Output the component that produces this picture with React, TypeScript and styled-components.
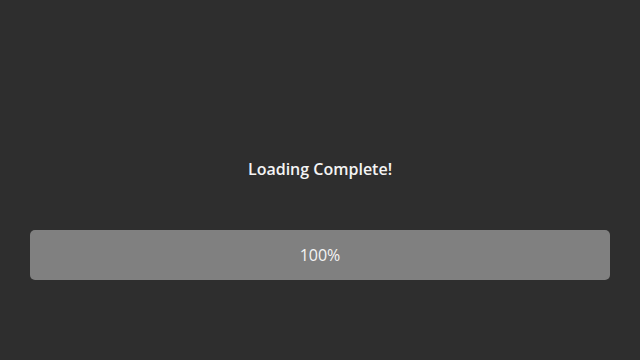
import styled, { createGlobalStyle } from "styled-components";

const GlobalStyle = createGlobalStyle`
  html, body {
    margin: 0;
    padding: 0;
    background: #2e2e2e;
  }
  body {
    font-family: "Open Sans", "Noto Sans", sans-serif;
  }
`;

const Screen = styled.div`
  width: 640px;
  height: 360px;
  box-sizing: border-box;
  padding: 158px 30px 0;
  display: flex;
  flex-direction: column;
  align-items: center;
  background: #2e2e2e;
`;

const Status = styled.div`
  color: #f4f4f4;
  font-size: 16px;
  font-weight: 600;
  line-height: 22px;
  height: 22px;
`;

const Bar = styled.div`
  margin-top: 50px;
  width: 100%;
  height: 50px;
  border-radius: 5px;
  background: #808080;
  display: flex;
  align-items: center;
  justify-content: center;
`;

const Percent = styled.span`
  color: #f4f4f4;
  font-size: 16px;
  font-weight: 500;
`;

const App = () => {
  const progress = 100;

  return (
    <>
      <GlobalStyle />
      <Screen>
        <Status>{progress >= 100 ? "Loading Complete!" : "Loading..."}</Status>
        <Bar>
          <Percent>{progress}%</Percent>
        </Bar>
      </Screen>
    </>
  );
};

export default App;
